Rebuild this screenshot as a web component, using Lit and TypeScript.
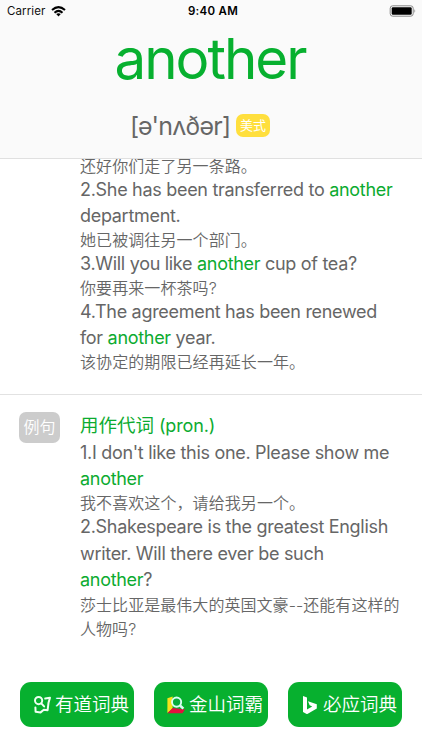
import { LitElement, html, css, svg } from "lit";
import { customElement } from "lit/decorators.js";

type Line = { kind: "en" | "cn"; text: string };

const first: Line[] = [
  { kind: "cn", text: "还好你们走了另一条路。" },
  { kind: "en", text: "2.She has been transferred to *another*" },
  { kind: "en", text: "department." },
  { kind: "cn", text: "她已被调往另一个部门。" },
  { kind: "en", text: "3.Will you like *another* cup of tea?" },
  { kind: "cn", text: "你要再来一杯茶吗?" },
  { kind: "en", text: "4.The agreement has been renewed" },
  { kind: "en", text: "for *another* year." },
  { kind: "cn", text: "该协定的期限已经再延长一年。" },
];
const second: Line[] = [
  { kind: "en", text: "1.I don't like this one. Please show me" },
  { kind: "en", text: "*another*" },
  { kind: "cn", text: "我不喜欢这个，请给我另一个。" },
  { kind: "en", text: "2.Shakespeare is the greatest English" },
  { kind: "en", text: "writer. Will there ever be such" },
  { kind: "en", text: "*another*?" },
];

const youdao = svg`<g fill="none" stroke="#effff2" stroke-width="2" stroke-linecap="round" stroke-linejoin="round"><circle cx="5.6" cy="4.6" r="3.6"/><path d="M8.3 7.4l2.8 3M12.2 2.6l4.8-.8-1.5 5-.9 7.4-3.8-.4-3.2 2.6-5-.6L2.4 11.4"/></g>`;
const kingsoft = svg`<path d="M.4 2.2L5.6.5v12L.4 17z" fill="#f7e11c"/><path d="M.4 17.2L5.6 12l12.4 1.4-2.6 3.8z" fill="#e3103f"/><circle cx="9.6" cy="6.1" r="4.6" fill="#07ab3b" stroke="#d9fff5" stroke-width="1.9"/><path d="M13 9.5l3.4 3.2" stroke="#d9fff5" stroke-width="2.5"/>`;
const bing = svg`<path d="M2 0l4 1.4v12l5.2-3-2.6-1.2L7 5.2l8.8 3.1v4.3L6 18.2l-4-2.3z" fill="#fff"/>`;

@customElement("app-root")
export class AppRoot extends LitElement {
  static styles = css`
    :host { display: flex; flex-direction: column; position: relative; width: 422px; height: 750px; overflow: hidden; background: #fff; color: #666; font-family: Inter, "Noto Sans CJK SC", sans-serif; }
    * { box-sizing: border-box; }
    header { height: 159px; flex: none; background: #fafafa; border-bottom: 1px solid #e0e0e0; }
    .status { height: 22px; display: grid; grid-template-columns: 1fr auto 1fr; align-items: center; padding: 0 6px 0 7px; color: #111; font-size: 11.5px; line-height: 22px; }
    .carrier { display: flex; align-items: center; gap: 6px; letter-spacing: .1px; }
    .time { font-weight: 600; color: #000; padding-left: 3px; letter-spacing: .3px; }
    .battery { justify-self: end; display: block; }
    h1 { margin: 0; height: 74px; line-height: 74px; text-align: center; font-size: 56.5px; font-weight: 400; letter-spacing: -2px; padding-right: 2px; color: #07b02f; }
    .phon { display: flex; align-items: center; height: 58px; padding-left: 130px; gap: 6px; }
    .ipa { font-size: 25px; white-space: nowrap; width: 100px; letter-spacing: -.75px; padding-top: 2px; }
    .us { width: 34px; height: 23px; border-radius: 7px; background: #ffdf3d; color: #fff; font-size: 13px; line-height: 22px; text-align: center; }
    main { flex: 1; overflow: hidden; }
    .block { padding-left: 80px; }
    .first { height: 236px; border-bottom: 1px solid #e2e2e2; }
    .second { position: relative; padding-top: 17px; }
    .line { white-space: pre; }
    .en { height: 26.4px; line-height: 26.4px; font-size: 18px; letter-spacing: -.3px; }
    .cn { height: 21.4px; line-height: 20.6px; font-size: 16px; letter-spacing: .08px; font-weight: 350; }
    .first .cn:first-child { height: 18px; line-height: 14px; }
    .long { white-space: pre; font-size: 16px; line-height: 24px; letter-spacing: .05px; font-weight: 350; }
    .hit { color: #0cab30; }
    .tag { position: absolute; left: 19px; top: 17px; width: 41px; height: 31px; border-radius: 7px; background: #ccc; color: #fff; text-align: center; line-height: 30px; font-size: 16px; font-weight: 350; }
    h2 { margin: 0; height: 28px; line-height: 27px; font-size: 18.5px; font-weight: 400; color: #0cab30; white-space: pre; }
    h2 span { font-size: 18px; letter-spacing: -.15px; }
    footer { display: flex; gap: 20px; padding: 0 20px; height: 69px; flex: none; }
    .btn { width: 114px; height: 45px; margin-top: 1px; border-radius: 11px; background: #07b02f; color: #fff; display: flex; align-items: center; padding-left: 13px; gap: 3px; font-size: 18.5px; line-height: 27px; font-weight: 350; white-space: nowrap; }
    .btn svg { flex: none; }
  `;

  private words(text: string) {
    return text.split("*").map((t, i) => (i % 2 ? html`<span class="hit">${t}</span>` : t));
  }

  private lines(list: Line[]) {
    return list.map((l) => html`<div class="line ${l.kind}">${this.words(l.text)}</div>`);
  }

  private button(icon: unknown, label: string) {
    return html`<div class="btn"><svg width="19" height="18" viewBox="0 0 19 18">${icon}</svg><span>${label}</span></div>`;
  }

  render() {
    return html`
      <header>
        <div class="status">
          <div class="carrier"><span>Carrier</span>
            <svg width="15" height="11" viewBox="0 0 15 11"><g fill="none" stroke="#000" stroke-width="2"><path d="M1 4.1Q7.5-1.8 14 4.1M3.5 6.7Q7.5 3 11.5 6.7"/></g><path d="M5.2 8.1Q7.5 6.2 9.8 8.1L7.5 10.6z"/></svg>
          </div>
          <span class="time">9:40 AM</span>
          <svg class="battery" width="27" height="12" viewBox="0 0 27 12"><rect x="1.2" y=".8" width="23" height="10.4" rx="2.5" fill="none" stroke="#888"/><rect x="2.7" y="2.2" width="20" height="7.6" rx="1.2"/><path d="M25.5 4q1.5 2 0 4z" fill="#777"/></svg>
        </div>
        <h1>another</h1>
        <div class="phon"><span class="ipa">[ə'nʌðər]</span><span class="us">美式</span></div>
      </header>
      <main>
        <section class="block first">${this.lines(first)}</section>
        <section class="block second">
          <span class="tag">例句</span>
          <h2>用作代词<span> (pron.)</span></h2>
          ${this.lines(second)}
          <div class="long">莎士比亚是最伟大的英国文豪--还能有这样的
人物吗?</div>
        </section>
      </main>
      <footer>${this.button(youdao, "有道词典")}${this.button(kingsoft, "金山词霸")}${this.button(bing, "必应词典")}</footer>
    `;
  }
}
